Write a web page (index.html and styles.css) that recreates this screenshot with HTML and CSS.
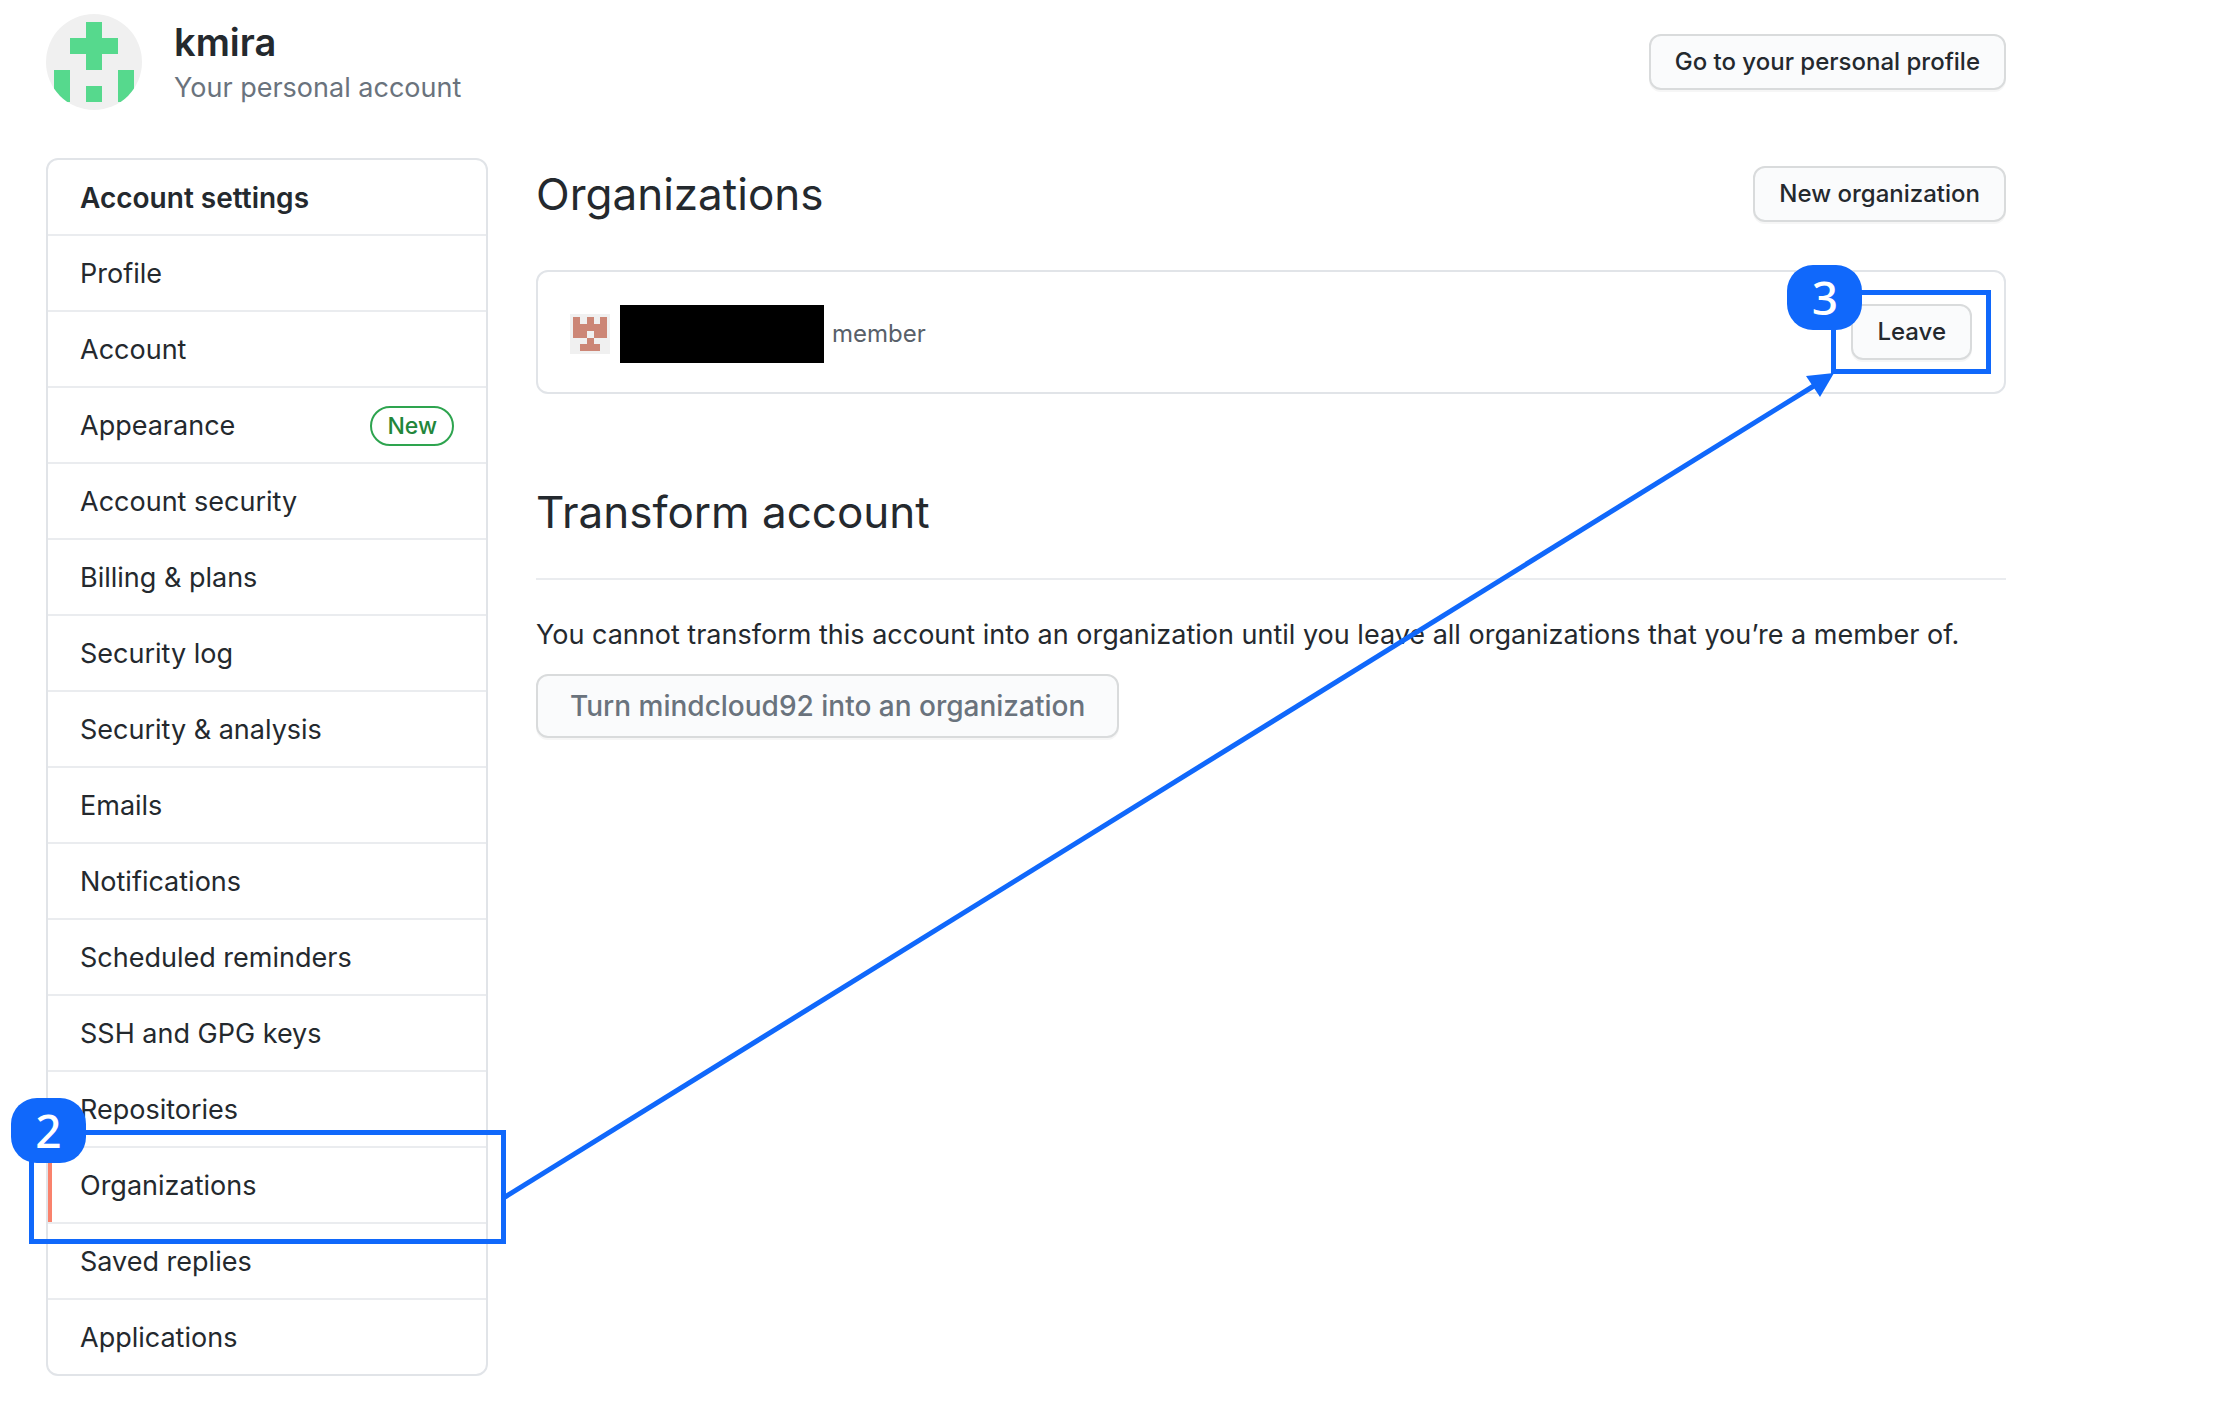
FILE: index.html
```html
<!DOCTYPE html>
<html lang="en">
<head>
<meta charset="utf-8">
<title>Organizations</title>
<link rel="stylesheet" href="styles.css">
</head>
<body>
<div class="page">
  <header class="profile">
    <svg class="profile-avatar" viewBox="0 0 96 96" aria-hidden="true">
      <defs><clipPath id="round"><circle cx="48" cy="48" r="48"/></clipPath></defs>
      <g clip-path="url(#round)">
        <rect width="96" height="96" fill="#f0f0f0"/>
        <path fill="#56d98d" d="M40 8h16v16h16v16H56v16H40V40H24V24h16zM8 56h16v32H8zM72 56h16v32H72zM40 72h16v16H40z"/>
      </g>
    </svg>
    <div class="profile-text">
      <h1 class="profile-name">kmira</h1>
      <p class="profile-kind">Your personal account</p>
    </div>
    <button class="btn" type="button">Go to your personal profile</button>
  </header>

  <div class="layout">
    <nav class="menu" aria-label="Account settings">
      <h2 class="menu-item menu-heading">Account settings</h2>
      <a class="menu-item" href="#">Profile</a>
      <a class="menu-item" href="#">Account</a>
      <a class="menu-item" href="#">Appearance <span class="label">New</span></a>
      <a class="menu-item" href="#">Account security</a>
      <a class="menu-item" href="#">Billing &amp; plans</a>
      <a class="menu-item" href="#">Security log</a>
      <a class="menu-item" href="#">Security &amp; analysis</a>
      <a class="menu-item" href="#">Emails</a>
      <a class="menu-item" href="#">Notifications</a>
      <a class="menu-item" href="#">Scheduled reminders</a>
      <a class="menu-item" href="#">SSH and GPG keys</a>
      <a class="menu-item" href="#">Repositories</a>
      <a class="menu-item menu-current" href="#" aria-current="page">Organizations
        <span class="callout callout-menu"><span class="step">2</span></span>
      </a>
      <a class="menu-item" href="#">Saved replies</a>
      <a class="menu-item" href="#">Applications</a>
    </nav>

    <main class="content">
      <div class="title-row">
        <h2 class="title">Organizations</h2>
        <button class="btn" type="button">New organization</button>
      </div>
      <div class="org">
        <div class="org-info">
          <svg class="org-avatar" viewBox="0 0 40 40" aria-hidden="true">
            <rect width="40" height="40" fill="#f0f0f0"/>
            <path fill="#cc8676" fill-rule="evenodd" d="M3 3h7v7h7V3h7v7h6V3h7v21H24v6h6v7H10v-7h7v-6H3zM17 17v7h7v-7z"/>
          </svg>
          <span class="org-name"></span>
          <span class="org-role">member</span>
        </div>
        <div class="org-action">
          <button class="btn" type="button">Leave</button>
          <span class="callout callout-leave"><span class="step">3</span></span>
        </div>
      </div>
      <h2 class="title title-ruled">Transform account</h2>
      <p class="note">You cannot transform this account into an organization until you leave all organizations that you’re a member of.</p>
      <button class="btn btn-large" type="button" disabled>Turn mindcloud92 into an organization</button>
    </main>
  </div>

  <svg class="arrow" viewBox="0 0 1330 830" aria-hidden="true">
    <path d="M0 827L1312 14" fill="none" stroke="#1068fb" stroke-width="5"/>
    <path d="M1329 3L1301 6L1315 27z" fill="#1068fb"/>
  </svg>
</div>
</body>
</html>
```
FILE: styles.css
```css
* {
  box-sizing: border-box;
}

body {
  margin: 0;
  background: #fff;
  color: #24292e;
  font-family: Inter, "Liberation Sans", sans-serif;
  font-size: 27px;
  line-height: 42px;
}

h1,
h2,
p {
  margin: 0;
}

.page {
  position: relative;
  padding: 14px 224px 24px 46px;
}

.profile {
  display: flex;
  align-items: center;
  margin-bottom: 48px;
}

.profile-avatar {
  width: 96px;
  height: 96px;
  margin-right: 32px;
}

.profile-text {
  flex: 1;
  padding-top: 2px;
}

.profile-name {
  font-size: 38px;
  font-weight: 600;
  line-height: 50px;
}

.profile-kind {
  color: #6a737d;
}

.btn {
  padding: 6px 24px;
  border: 2px solid #d9dbdc;
  border-radius: 12px;
  background: #fafbfc;
  box-shadow: 0 2px 0 rgba(27, 31, 35, 0.04);
  color: #24292e;
  font-family: inherit;
  font-size: 24px;
  font-weight: 500;
  line-height: 40px;
  white-space: nowrap;
}

.btn-large {
  padding: 10px 32px;
  font-size: 28px;
}

.btn:disabled {
  color: #6a737d;
}

.layout {
  display: flex;
  align-items: flex-start;
  gap: 48px;
}

.menu {
  flex: 0 0 442px;
  border: 2px solid #e1e4e8;
  border-radius: 12px;
}

.menu-item {
  position: relative;
  display: flex;
  align-items: center;
  justify-content: space-between;
  height: 76px;
  padding: 2px 32px 0;
  border-bottom: 2px solid #eaecef;
  color: #24292e;
  font-weight: 400;
  text-decoration: none;
}

.menu-item:last-child {
  height: 74px;
  border-bottom: 0;
}

.menu-heading {
  font-size: 28px;
  font-weight: 600;
}

.menu-current::before {
  content: "";
  position: absolute;
  top: 0;
  bottom: 0;
  left: 0;
  width: 4px;
  background: #f9826c;
}

.label {
  padding: 0 15px;
  border: 2px solid #2ea44f;
  border-radius: 20px;
  color: #22863a;
  font-size: 23px;
  font-weight: 500;
  line-height: 36px;
}

.content {
  flex: 1;
  min-width: 0;
}

.title-row {
  display: flex;
  align-items: center;
  justify-content: space-between;
  margin-bottom: 40px;
}

.title {
  font-size: 44px;
  font-weight: 400;
  line-height: 72px;
}

.org {
  display: flex;
  align-items: center;
  height: 124px;
  margin-bottom: 82px;
  padding: 0 32px;
  border: 2px solid #e1e4e8;
  border-radius: 12px;
}

.org-info {
  display: flex;
  align-items: center;
  padding-top: 4px;
}

.org-avatar {
  width: 40px;
  height: 40px;
}

.org-name {
  width: 204px;
  height: 58px;
  margin: 0 8px 0 10px;
  background: #000;
}

.org-role {
  color: #586069;
  font-size: 24px;
}

.org-action {
  position: relative;
  margin-left: auto;
}

.title-ruled {
  margin-bottom: 34px;
  padding-bottom: 30px;
  border-bottom: 2px solid #eaecef;
}

.note {
  margin-bottom: 18px;
}

/* Walkthrough callouts drawn over the page */
.callout {
  position: absolute;
  z-index: 1;
  border: 5px solid #1068fb;
  pointer-events: none;
}

.callout-menu {
  inset: -18px -20px -22px -19px;
}

.callout-leave {
  inset: -14px -19px -14px -20px;
}

.step {
  position: absolute;
  top: -37px;
  left: -23px;
  width: 75px;
  height: 65px;
  border-radius: 26px;
  background: #1068fb;
  color: #fff;
  font-family: "Noto Sans", "Open Sans", sans-serif;
  font-size: 46px;
  font-weight: 500;
  line-height: 64px;
  text-align: center;
}

.callout-leave .step {
  top: -30px;
  left: -49px;
}

.arrow {
  position: absolute;
  top: 370px;
  left: 505px;
  width: 1330px;
  height: 830px;
  pointer-events: none;
}
```
